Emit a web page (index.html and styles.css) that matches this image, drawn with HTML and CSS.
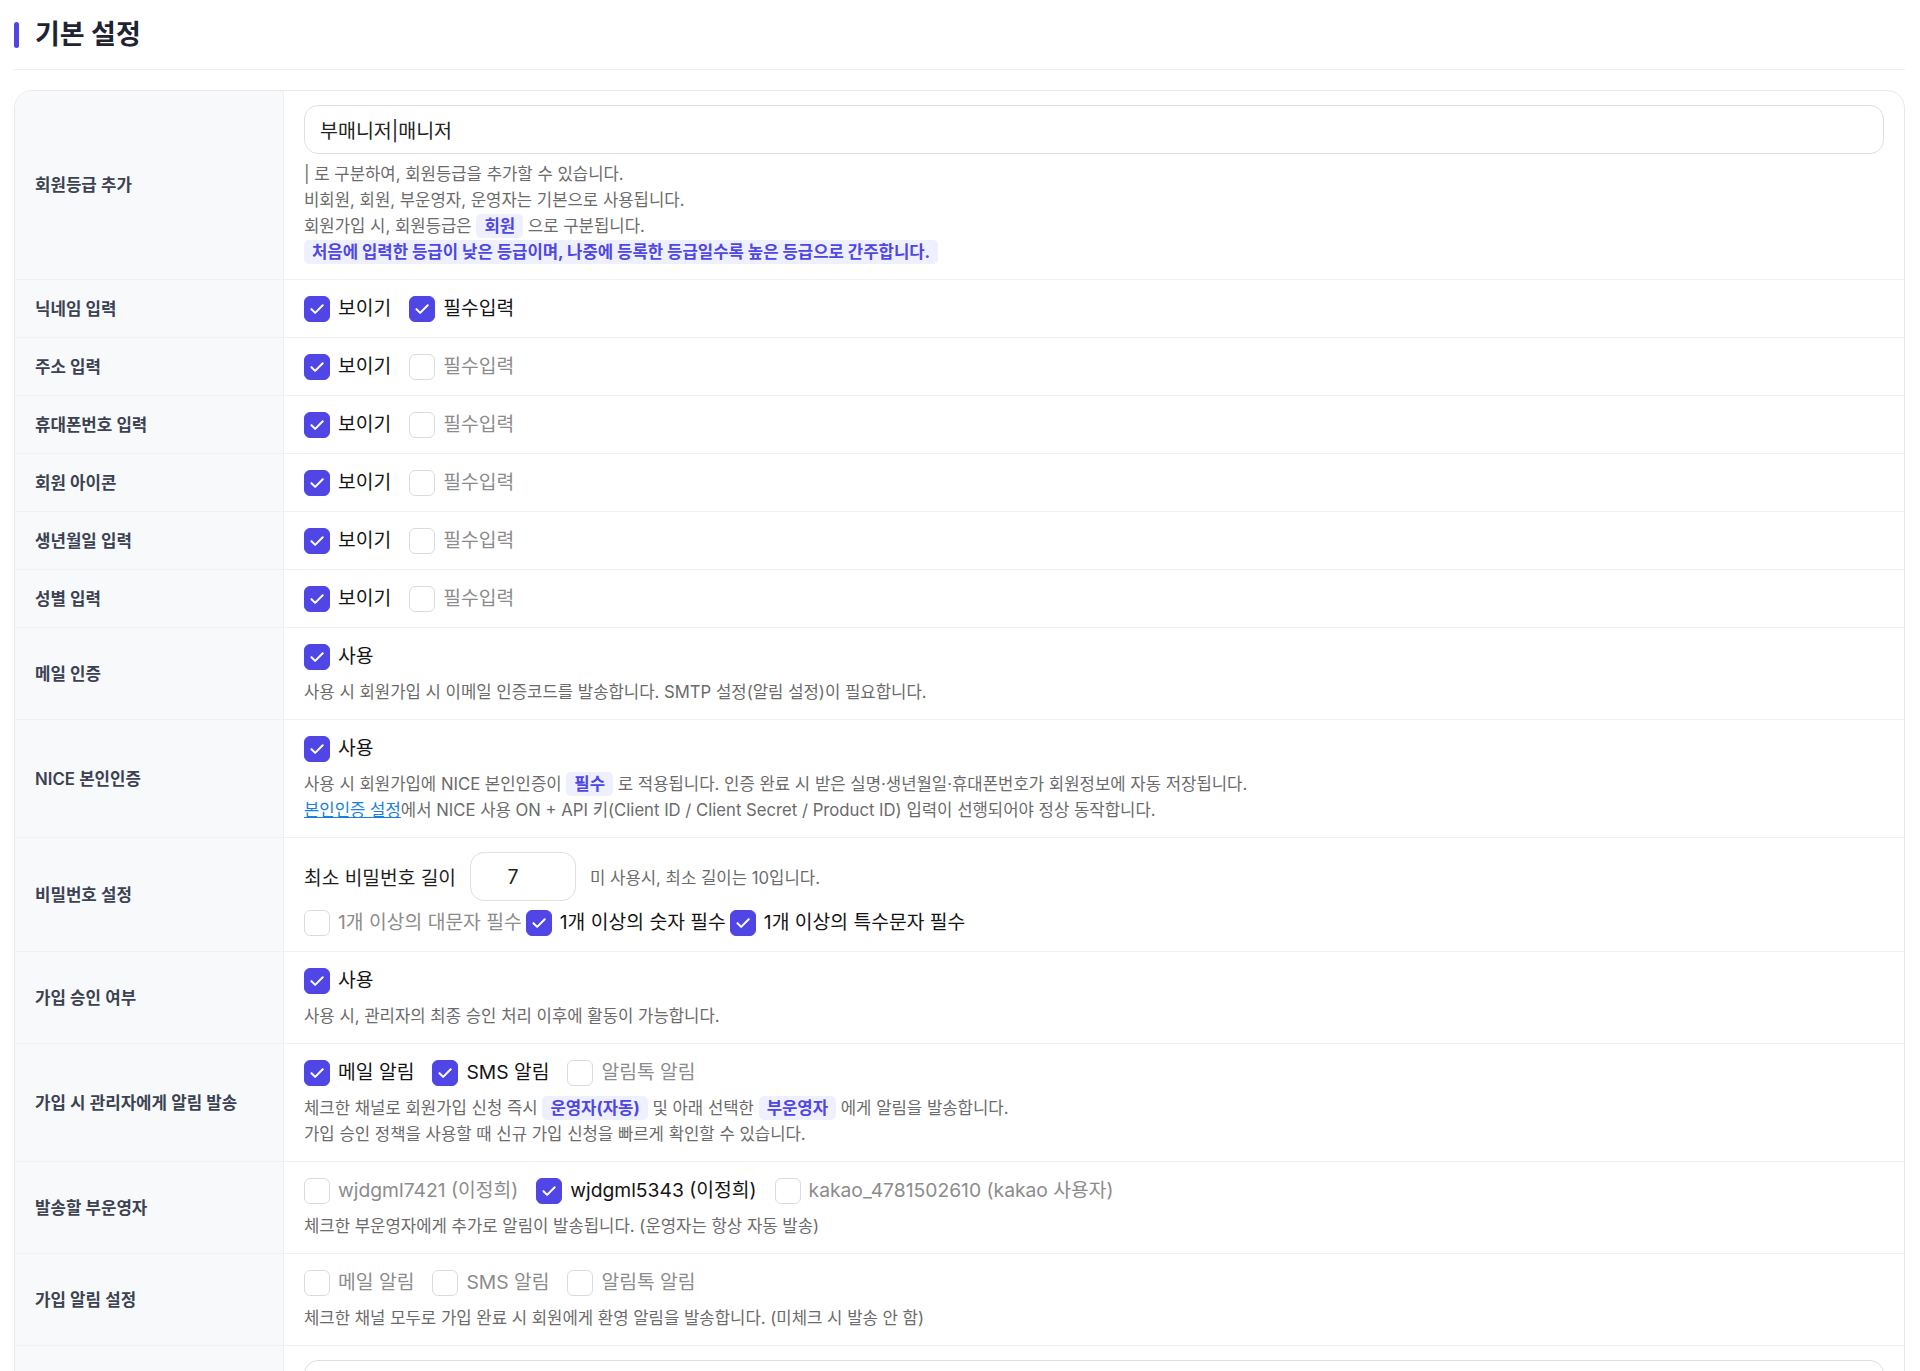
FILE: index.html
```html
<!DOCTYPE html>
<html lang="ko">
<head>
<meta charset="utf-8">
<title>기본 설정</title>
<link rel="stylesheet" href="styles.css">
</head>
<body>
<div class="page">
  <header class="section-head">
    <h2 class="section-title">기본 설정</h2>
  </header>

  <div class="card">
    <div class="row">
      <div class="label">회원등급 추가</div>
      <div class="field">
        <input class="text-input" type="text" value="부매니저|매니저">
        <div class="help help-first">
          <p>| 로 구분하여, 회원등급을 추가할 수 있습니다.</p>
          <p>비회원, 회원, 부운영자, 운영자는 기본으로 사용됩니다.</p>
          <p>회원가입 시, 회원등급은 <span class="mark">회원</span> 으로 구분됩니다.</p>
          <p><span class="mark">처음에 입력한 등급이 낮은 등급이며, 나중에 등록한 등급일수록 높은 등급으로 간주합니다.</span></p>
        </div>
      </div>
    </div>

    <div class="row">
      <div class="label">닉네임 입력</div>
      <div class="field">
        <div class="checks">
          <label class="chk on"><span class="box"><svg viewBox="0 0 26 26"><polyline points="7,13.2 11,17.2 19.2,9"/></svg></span><span class="txt">보이기</span></label>
          <label class="chk on"><span class="box"><svg viewBox="0 0 26 26"><polyline points="7,13.2 11,17.2 19.2,9"/></svg></span><span class="txt">필수입력</span></label>
        </div>
      </div>
    </div>

    <div class="row">
      <div class="label">주소 입력</div>
      <div class="field">
        <div class="checks">
          <label class="chk on"><span class="box"><svg viewBox="0 0 26 26"><polyline points="7,13.2 11,17.2 19.2,9"/></svg></span><span class="txt">보이기</span></label>
          <label class="chk"><span class="box"></span><span class="txt">필수입력</span></label>
        </div>
      </div>
    </div>

    <div class="row">
      <div class="label">휴대폰번호 입력</div>
      <div class="field">
        <div class="checks">
          <label class="chk on"><span class="box"><svg viewBox="0 0 26 26"><polyline points="7,13.2 11,17.2 19.2,9"/></svg></span><span class="txt">보이기</span></label>
          <label class="chk"><span class="box"></span><span class="txt">필수입력</span></label>
        </div>
      </div>
    </div>

    <div class="row">
      <div class="label">회원 아이콘</div>
      <div class="field">
        <div class="checks">
          <label class="chk on"><span class="box"><svg viewBox="0 0 26 26"><polyline points="7,13.2 11,17.2 19.2,9"/></svg></span><span class="txt">보이기</span></label>
          <label class="chk"><span class="box"></span><span class="txt">필수입력</span></label>
        </div>
      </div>
    </div>

    <div class="row">
      <div class="label">생년월일 입력</div>
      <div class="field">
        <div class="checks">
          <label class="chk on"><span class="box"><svg viewBox="0 0 26 26"><polyline points="7,13.2 11,17.2 19.2,9"/></svg></span><span class="txt">보이기</span></label>
          <label class="chk"><span class="box"></span><span class="txt">필수입력</span></label>
        </div>
      </div>
    </div>

    <div class="row">
      <div class="label">성별 입력</div>
      <div class="field">
        <div class="checks">
          <label class="chk on"><span class="box"><svg viewBox="0 0 26 26"><polyline points="7,13.2 11,17.2 19.2,9"/></svg></span><span class="txt">보이기</span></label>
          <label class="chk"><span class="box"></span><span class="txt">필수입력</span></label>
        </div>
      </div>
    </div>

    <div class="row">
      <div class="label">메일 인증</div>
      <div class="field">
        <div class="checks">
          <label class="chk on"><span class="box"><svg viewBox="0 0 26 26"><polyline points="7,13.2 11,17.2 19.2,9"/></svg></span><span class="txt">사용</span></label>
        </div>
        <div class="help">
          <p>사용 시 회원가입 시 이메일 인증코드를 발송합니다. SMTP 설정(알림 설정)이 필요합니다.</p>
        </div>
      </div>
    </div>

    <div class="row">
      <div class="label">NICE 본인인증</div>
      <div class="field">
        <div class="checks">
          <label class="chk on"><span class="box"><svg viewBox="0 0 26 26"><polyline points="7,13.2 11,17.2 19.2,9"/></svg></span><span class="txt">사용</span></label>
        </div>
        <div class="help">
          <p>사용 시 회원가입에 NICE 본인인증이 <span class="mark">필수</span> 로 적용됩니다. 인증 완료 시 받은 실명·생년월일·휴대폰번호가 회원정보에 자동 저장됩니다.</p>
          <p><a class="link" href="#">본인인증 설정</a>에서 NICE 사용 ON + API 키(Client ID / Client Secret / Product ID) 입력이 선행되어야 정상 동작합니다.</p>
        </div>
      </div>
    </div>

    <div class="row">
      <div class="label">비밀번호 설정</div>
      <div class="field">
        <div class="pw-line">
          <span class="pw-label">최소 비밀번호 길이</span>
          <input class="pw-input" type="text" value="7">
          <span class="pw-note">미 사용시, 최소 길이는 10입니다.</span>
        </div>
        <div class="checks tight">
          <label class="chk"><span class="box"></span><span class="txt">1개 이상의 대문자 필수</span></label>
          <label class="chk on"><span class="box"><svg viewBox="0 0 26 26"><polyline points="7,13.2 11,17.2 19.2,9"/></svg></span><span class="txt">1개 이상의 숫자 필수</span></label>
          <label class="chk on"><span class="box"><svg viewBox="0 0 26 26"><polyline points="7,13.2 11,17.2 19.2,9"/></svg></span><span class="txt">1개 이상의 특수문자 필수</span></label>
        </div>
      </div>
    </div>

    <div class="row">
      <div class="label">가입 승인 여부</div>
      <div class="field">
        <div class="checks">
          <label class="chk on"><span class="box"><svg viewBox="0 0 26 26"><polyline points="7,13.2 11,17.2 19.2,9"/></svg></span><span class="txt">사용</span></label>
        </div>
        <div class="help">
          <p>사용 시, 관리자의 최종 승인 처리 이후에 활동이 가능합니다.</p>
        </div>
      </div>
    </div>

    <div class="row">
      <div class="label">가입 시 관리자에게 알림 발송</div>
      <div class="field">
        <div class="checks">
          <label class="chk on"><span class="box"><svg viewBox="0 0 26 26"><polyline points="7,13.2 11,17.2 19.2,9"/></svg></span><span class="txt">메일 알림</span></label>
          <label class="chk on"><span class="box"><svg viewBox="0 0 26 26"><polyline points="7,13.2 11,17.2 19.2,9"/></svg></span><span class="txt">SMS 알림</span></label>
          <label class="chk"><span class="box"></span><span class="txt">알림톡 알림</span></label>
        </div>
        <div class="help">
          <p>체크한 채널로 회원가입 신청 즉시 <span class="mark">운영자(자동)</span> 및 아래 선택한 <span class="mark">부운영자</span> 에게 알림을 발송합니다.</p>
          <p>가입 승인 정책을 사용할 때 신규 가입 신청을 빠르게 확인할 수 있습니다.</p>
        </div>
      </div>
    </div>

    <div class="row">
      <div class="label">발송할 부운영자</div>
      <div class="field">
        <div class="checks">
          <label class="chk"><span class="box"></span><span class="txt">wjdgml7421 (이정희)</span></label>
          <label class="chk on"><span class="box"><svg viewBox="0 0 26 26"><polyline points="7,13.2 11,17.2 19.2,9"/></svg></span><span class="txt">wjdgml5343 (이정희)</span></label>
          <label class="chk"><span class="box"></span><span class="txt">kakao_4781502610 (kakao 사용자)</span></label>
        </div>
        <div class="help">
          <p>체크한 부운영자에게 추가로 알림이 발송됩니다. (운영자는 항상 자동 발송)</p>
        </div>
      </div>
    </div>

    <div class="row">
      <div class="label">가입 알림 설정</div>
      <div class="field">
        <div class="checks">
          <label class="chk"><span class="box"></span><span class="txt">메일 알림</span></label>
          <label class="chk"><span class="box"></span><span class="txt">SMS 알림</span></label>
          <label class="chk"><span class="box"></span><span class="txt">알림톡 알림</span></label>
        </div>
        <div class="help">
          <p>체크한 채널 모두로 가입 완료 시 회원에게 환영 알림을 발송합니다. (미체크 시 발송 안 함)</p>
        </div>
      </div>
    </div>

    <div class="row">
      <div class="label"></div>
      <div class="field">
        <input class="text-input" type="text" value="">
      </div>
    </div>
  </div>
</div>
</body>
</html>
```

FILE: styles.css
```css
* {
  box-sizing: border-box;
}

body {
  margin: 0;
  background: #ffffff;
  font-family: Inter, "Noto Sans CJK KR", sans-serif;
  color: #1b1d24;
}

.page {
  padding: 0 15px 40px 14px;
}

.section-head {
  padding: 18px 0 17px;
  border-bottom: 1px solid #eeeff2;
  margin-bottom: 20px;
}

.section-title {
  margin: 0;
  display: flex;
  align-items: center;
  gap: 16px;
  font-size: 27px;
  line-height: 34px;
  font-weight: 700;
  color: #1f2433;
}

.section-title::before {
  content: "";
  width: 5px;
  height: 26px;
  border-radius: 3px;
  background: #4f46e5;
}

.card {
  border: 1px solid #e8e9ed;
  border-radius: 18px;
  overflow: hidden;
  background: #ffffff;
}

.row {
  display: grid;
  grid-template-columns: 269px 1fr;
  border-bottom: 1px solid #f0f1f4;
}

.label {
  display: flex;
  align-items: center;
  padding: 0 20px;
  background: #f8f9fb;
  border-right: 1px solid #f0f1f4;
  font-size: 16.8px;
  line-height: 22px;
  font-weight: 600;
  color: #3b4252;
}

.field {
  padding: 14px 20px;
  min-width: 0;
}

.text-input {
  display: block;
  width: 100%;
  height: 49px;
  padding: 0 15px;
  border: 1px solid #dedfe3;
  border-radius: 14px;
  background: #ffffff;
  font-family: inherit;
  font-size: 19.5px;
  color: #222222;
  outline: none;
}

.help {
  margin-top: 8px;
  font-size: 16.7px;
  line-height: 26px;
  color: #6b6b6b;
}

.help-first {
  margin-top: 7px;
}

.help p {
  margin: 0;
  white-space: nowrap;
}

.mark {
  padding: 2px 8px;
  border-radius: 5px;
  background: #eef0fe;
  color: #4f46e5;
  font-weight: 700;
}

.link {
  color: #1a80dd;
  text-decoration: underline;
}

.checks {
  display: flex;
  align-items: center;
  gap: 18px;
  height: 29px;
}

.checks.tight {
  gap: 4px;
  margin-top: 7px;
}

.chk {
  display: inline-flex;
  align-items: center;
  gap: 8px;
  font-size: 19.3px;
  line-height: 29px;
  color: #8c8c8c;
  white-space: nowrap;
}

.chk.on {
  color: #141414;
}

.box {
  flex: none;
  width: 26px;
  height: 26px;
  border: 1px solid #dadbe0;
  border-radius: 6px;
  background: #ffffff;
  display: flex;
  align-items: center;
  justify-content: center;
}

.chk.on .box {
  background: #4f46e5;
  border-color: #4f46e5;
}

.box svg {
  width: 26px;
  height: 26px;
  display: block;
}

.box polyline {
  fill: none;
  stroke: #ffffff;
  stroke-width: 2.2;
  stroke-linecap: round;
  stroke-linejoin: round;
}

.pw-line {
  display: flex;
  align-items: center;
  gap: 14px;
}

.pw-label {
  font-size: 19.2px;
  color: #1e1e1e;
}

.pw-input {
  width: 106px;
  height: 49px;
  padding: 0 20px 0 0;
  border: 1px solid #dedfe3;
  border-radius: 14px;
  background: #ffffff;
  font-family: inherit;
  font-size: 19.5px;
  color: #222222;
  text-align: center;
  outline: none;
}

.pw-note {
  font-size: 16.7px;
  color: #6b6b6b;
}
```
